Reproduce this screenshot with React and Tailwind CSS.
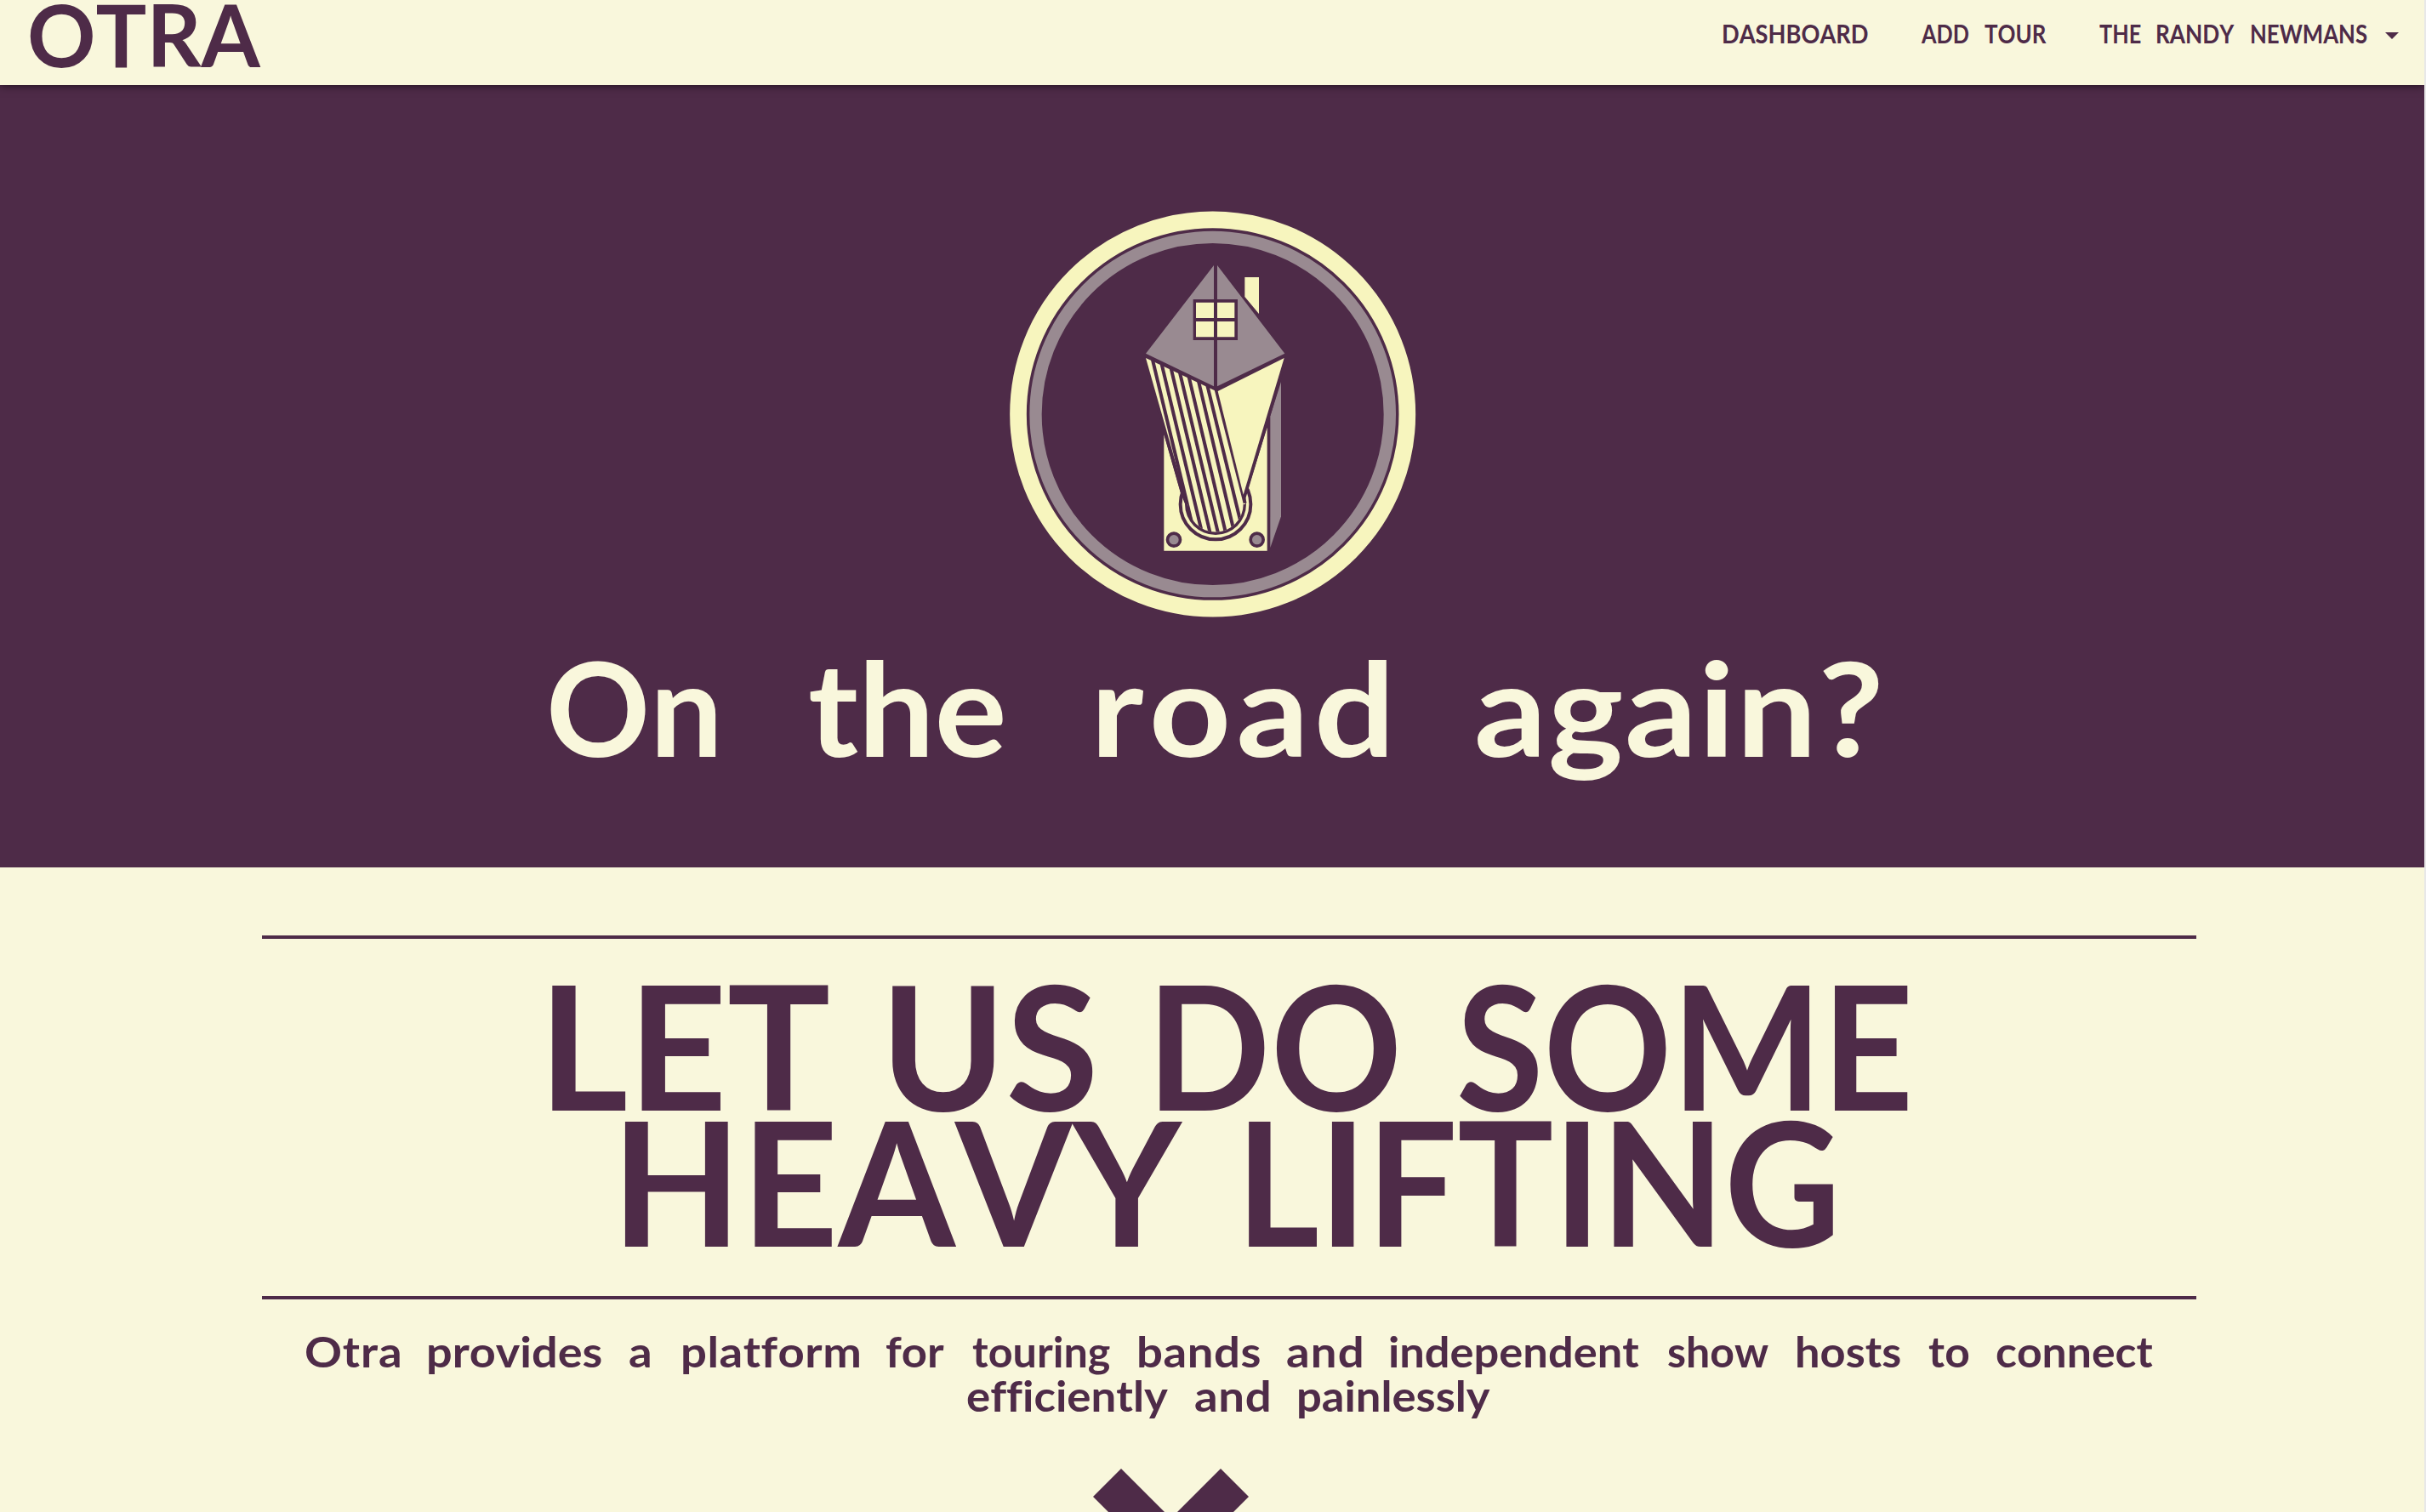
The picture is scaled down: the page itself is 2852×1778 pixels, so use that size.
import { useLayoutEffect, useRef } from "react";

/* A word whose glyph width and tracking are fitted so that its ink spans exactly `w` pixels. */
function Word({ children, w, gap = 0 }) {
  const ref = useRef(null);
  useLayoutEffect(() => {
    const el = ref.current;
    const cs = getComputedStyle(el);
    const ctx = document.createElement("canvas").getContext("2d");
    ctx.font = `${cs.fontWeight} ${cs.fontSize} ${cs.fontFamily}`;
    ctx.fontKerning = "none";
    const m = ctx.measureText(children);
    const ink = m.actualBoundingBoxLeft + m.actualBoundingBoxRight;
    const n = children.length;
    const scale = Math.min(w / ink, 1.09);
    el.style.letterSpacing = n > 1 ? `${(w / scale - ink) / (n - 1)}px` : "0px";
    el.style.transform = `scaleX(${scale})`;
    el.style.marginLeft = `${m.actualBoundingBoxLeft * scale}px`;
  }, [children, w]);
  return (
    <span className="flex shrink-0" style={{ width: w, marginLeft: gap }}>
      <span ref={ref} className="block origin-left whitespace-nowrap [font-kerning:none]">
        {children}
      </span>
    </span>
  );
}

/* words: [text, left, right] in pixels; start is the container's left edge. */
function Line({ words, start = 0, className = "" }) {
  return (
    <span className={`flex ${className}`}>
      {words.map(([t, l, r], i) => (
        <Word key={i} w={r - l} gap={l - (i ? words[i - 1][2] : start)}>
          {t}
        </Word>
      ))}
    </span>
  );
}

const stripes = [
  [555, 580, 697, 1170],
  [587, 595, 727, 1180],
  [620, 610, 759, 1195],
  [651, 625, 787, 1195],
  [683, 640, 813, 1190],
  [717, 655, 840, 1175],
  [748, 670, 865, 1150],
  [779, 685, 881, 1085],
];

function Badge() {
  return (
    <svg viewBox="0 0 1530 1530" className="block size-[510px]" aria-hidden="true">
      <defs>
        <clipPath id="tube">
          <path d="M500 500H1040V1089H875A98 98 0 0 1 679 1089H500Z" />
        </clipPath>
      </defs>
      <circle cx="767" cy="771" r="686" fill="none" stroke="#f7f5be" strokeWidth="59" />
      <circle cx="767" cy="771" r="624.5" fill="none" stroke="#998a91" strokeWidth="43" />
      <path d="M880 288H930V417L880 357Z" fill="#f7f5be" />
      <path d="M1008 657V1132L970 1242V778Z" fill="#998a91" />
      <path d="M595 843L654 1050H893V1030L959 818V1253H595Z" fill="#f7f5be" />
      <circle cx="777" cy="1089" r="124" fill="#f7f5be" stroke="#4e2b48" strokeWidth="12" />
      <path d="M519 573L655 1052L668 1085L777 1089L880 1085L882 1072L895 1028L1031 573Z" fill="#4e2b48" />
      <circle cx="777" cy="1089" r="108" fill="#4e2b48" />
      <g clipPath="url(#tube)">
        <path d="M531 573L779 690L882 1085V1200H715L678 1089Z" fill="#f7f5be" />
        {stripes.map(([a, b, c, d]) => (
          <path key={a} d={`M${a} ${b}L${c} ${d}`} stroke="#4e2b48" strokeWidth="12" />
        ))}
      </g>
      <path d="M785 690L1019 573L875 1055Z" fill="#f7f5be" />
      <path d="M771 246V673L531 557ZM783 246V673L1021 557Z" fill="#998a91" />
      <path d="M698 366H855V510H698Z" fill="#4e2b48" />
      <path d="M708 377H771V432H708ZM783 377H844V432H783ZM708 444H771V499H708ZM783 444H844V499H783Z" fill="#f7f5be" />
      <circle cx="630" cy="1214" r="22.5" fill="#998a91" stroke="#4e2b48" strokeWidth="11" />
      <circle cx="923" cy="1214" r="22.5" fill="#998a91" stroke="#4e2b48" strokeWidth="11" />
    </svg>
  );
}

export default function App() {
  return (
    <div className="flex h-[1778px] w-[2852px] overflow-hidden bg-[#e8e8e8] font-['Lato',sans-serif] font-bold text-[#4e2b48]">
      <div className="flex w-[2850px] flex-col overflow-hidden bg-[#f9f7dc]">
        <header className="relative z-10 flex h-[100px] shrink-0 items-start bg-[#f9f7dc] shadow-[0_0_10px_rgba(0,0,0,0.7)]">
          <a className="w-[2026px] text-[102px] leading-[80px]">
            <Line words={[["OTRA", 35, 307]]} />
          </a>
          <nav className="flex pt-[19px] text-[30px] leading-[40px]">
            <Line start={2026} words={[["DASHBOARD", 2026, 2196]]} />
            <Line start={2196} words={[["ADD", 2258, 2314], ["TOUR", 2333, 2406]]} />
            <Line start={2406} words={[["THE", 2468, 2517], ["RANDY", 2536, 2627], ["NEWMANS", 2647, 2783]]} />
            <svg viewBox="0 0 16 8" className="mt-[19px] ml-[21px] h-2 w-4 fill-current">
              <path d="M0 0H16L8 8Z" />
            </svg>
          </nav>
        </header>

        <section className="flex h-[920px] shrink-0 flex-col items-center bg-[#4e2b48] pt-[130px] text-[#f9f7dc]">
          <Badge />
          <h1 className="w-full pt-[11px] text-[154px] leading-[160px]">
            <Line words={[["On", 647, 842], ["the", 952, 1179], ["road", 1292, 1630], ["again?", 1736, 2208]]} />
          </h1>
        </section>

        <main className="ml-[308px] w-[2274px] pt-20">
          <h2 className="h-[428px] border-y-4 border-[#4e2b48] pt-[43px] text-[204px] leading-[160px]">
            <Line start={308} words={[["LET", 649, 974], ["US", 1049, 1285], ["DO", 1363, 1642], ["SOME", 1716, 2243]]} />
            <Line start={308} words={[["HEAVY", 735, 1391], ["LIFTING", 1468, 2155]]} />
          </h2>
          <p className="pt-[35px] text-[50px] leading-[52px]">
            <Line
              start={308}
              words={[
                ["Otra", 359, 470], ["provides", 504, 707], ["a", 740, 768], ["platform", 803, 1009],
                ["for", 1042, 1110], ["touring", 1143, 1305], ["bands", 1339, 1481], ["and", 1513, 1601],
                ["independent", 1634, 1927], ["show", 1961, 2079], ["hosts", 2113, 2234], ["to", 2267, 2315],
                ["connect", 2347, 2531],
              ]}
            />
            <Line start={308} words={[["efficiently", 1137, 1371], ["and", 1405, 1492], ["painlessly", 1527, 1752]]} />
          </p>
          <svg viewBox="0 0 183 184" className="mt-[60px] ml-[977px] h-[184px] w-[183px] fill-current">
            <path d="M33 0L91.500 58.500L150 0L183 33L124.500 91.500L183 150L150 183L91.500 124.500L33 183L0 150L58.500 91.500L0 33Z" />
          </svg>
        </main>
      </div>
    </div>
  );
}
